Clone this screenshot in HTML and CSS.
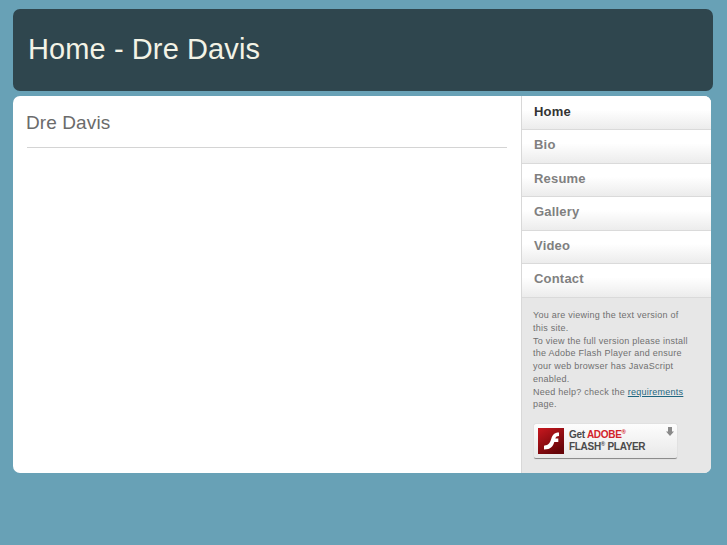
FILE: index.html
```html
<!DOCTYPE html>
<html lang="en">
<head>
    <meta charset="UTF-8">
    <meta name="viewport" content="width=device-width, initial-scale=1.0">
    <title>Home - Dre Davis</title>
    <link rel="stylesheet" href="styles.css">
</head>
<body>
    <div class="page">
        <header class="site-header">
            <h1>Home - Dre Davis</h1>
        </header>
        <div class="main">
            <div class="content">
                <h2>Dre Davis</h2>
            </div>
            <div class="sidebar">
                <nav class="menu">
                    <a class="current" href="#">Home</a>
                    <a href="#">Bio</a>
                    <a href="#">Resume</a>
                    <a href="#">Gallery</a>
                    <a href="#">Video</a>
                    <a href="#">Contact</a>
                </nav>
                <div class="notice">
                    <p>You are viewing the text version of this site.<br>
                    To view the full version please install the Adobe Flash Player and ensure your web browser has JavaScript enabled.<br>
                    Need help? check the <a href="#">requirements</a> page.</p>
                    <a class="flash-badge" href="#">
                        <svg class="flash-logo" width="26" height="26" viewBox="0 0 26 26">
                            <defs>
                                <linearGradient id="flashRed" x1="0" y1="0" x2="0.6" y2="1">
                                    <stop offset="0" stop-color="#c8181f"/>
                                    <stop offset="1" stop-color="#660408"/>
                                </linearGradient>
                            </defs>
                            <rect width="26" height="26" fill="url(#flashRed)"/>
                            <path d="M21 4.500c-5 0-6.500 2.500-7.800 6.500c-1.200 3.700-2.200 6-7.200 6.700v3.800c7 0 9-3.300 10.300-7.500h4v-3.500h-3c.7-1.800 1.700-2.500 3.700-2.500z" fill="#fff"/>
                        </svg>
                        <span class="flash-text">
                            <span class="flash-line">Get <em>ADOBE<sup>®</sup></em></span>
                            <span class="flash-line">FLASH<sup>®</sup> PLAYER</span>
                        </span>
                        <svg class="flash-arrow" width="8" height="9" viewBox="0 0 8 9">
                            <path d="M2 0h4v4.500h2l-4 4.500l-4-4.500h2z" fill="#8a8a8a"/>
                        </svg>
                    </a>
                </div>
            </div>
        </div>
    </div>
</body>
</html>
```

FILE: styles.css
```css
html, body {
    margin: 0;
    padding: 0;
}

body {
    background-color: #68a1b6;
    font-family: "Liberation Sans", Arial, sans-serif;
}

.page {
    padding: 9px 14px 0 13px;
}

.site-header {
    height: 82px;
    background-color: #2f464e;
    border-radius: 7px;
    display: flex;
    align-items: center;
}

.site-header h1 {
    margin: 0 0 2px 15px;
    font-size: 29px;
    letter-spacing: 0.1px;
    font-weight: normal;
    color: #f3f3e6;
}

.main {
    display: flex;
    width: 698px;
    height: 377px;
    margin-top: 5px;
    background-color: #fff;
    border-radius: 7px;
    overflow: hidden;
}

.content {
    flex: 1;
    padding: 0 14px 0 14px;
}

.content h2 {
    margin: 0;
    padding: 16px 0 13px;
    text-indent: -1px;
    font-size: 19px;
    letter-spacing: 0.1px;
    line-height: 22px;
    font-weight: normal;
    color: #6b6b6b;
    border-bottom: 1px solid #d4d4d4;
}

.sidebar {
    width: 189px;
    background-color: #e7e7e7;
    border-left: 1px solid #d8d8d8;
}

.menu {
    padding-top: 0.5px;
    background-color: #fff;
}

.menu a {
    display: block;
    height: 32.5px;
    padding-left: 12px;
    line-height: 29.5px;
    font-size: 13px;
    font-weight: bold;
    letter-spacing: 0.2px;
    color: #808080;
    text-decoration: none;
    background: linear-gradient(#fff 0, #fff 40%, #ececec 100%);
    border-bottom: 1px solid #dadada;
}

.menu a.current {
    color: #333;
}

.notice {
    padding: 11.5px 20px 0 11px;
}

.notice p {
    margin: 0;
    font-size: 9px;
    line-height: 12.75px;
    letter-spacing: 0.25px;
    color: #707070;
}

.notice p a {
    color: #1f6680;
}

.flash-badge {
    display: flex;
    align-items: center;
    position: relative;
    width: 143px;
    height: 35px;
    margin: 13px 0 0 1px;
    padding-left: 4px;
    box-sizing: border-box;
    background: linear-gradient(#fdfdfd, #e8e8e8);
    border-bottom: 1px solid #8c8c8c;
    border-radius: 2px;
    box-shadow: 0 0 1px #aaa;
    text-decoration: none;
}

.flash-logo {
    flex: none;
}

.flash-text {
    display: flex;
    flex-direction: column;
    margin-left: 5px;
    font-size: 10px;
    line-height: 12px;
    letter-spacing: -0.3px;
    font-weight: bold;
    color: #4a4a4a;
}

.flash-line em {
    font-style: normal;
    color: #d2232a;
}

.flash-line sup {
    font-size: 6px;
    line-height: 0;
}

.flash-arrow {
    position: absolute;
    top: 3px;
    right: 3px;
}
```
